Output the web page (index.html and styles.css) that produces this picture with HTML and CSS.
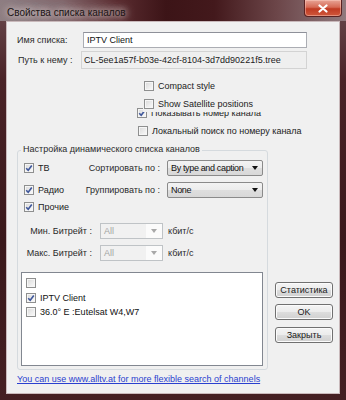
FILE: index.html
```html
<!DOCTYPE html>
<html>
<head>
<meta charset="utf-8">
<link rel="stylesheet" href="styles.css">
</head>
<body>
<div class="window">
  <div class="titlebar">
    <span class="title">Свойства списка каналов</span>
    <div class="close">
      <svg width="12" height="9" viewBox="0 0 12 9"><path d="M2.5 1.5 L9.5 7.5 M9.5 1.5 L2.5 7.5" stroke="#fff" stroke-width="2.2" stroke-linecap="round"/></svg>
    </div>
  </div>
  <div class="client">
    <div class="row name-row">
      <span class="lbl lbl-name">Имя списка:</span>
      <div class="input">IPTV Client</div>
    </div>
    <div class="row path-row">
      <span class="lbl lbl-path">Путь к нему :</span>
      <div class="readonly">CL-5ee1a57f-b03e-42cf-8104-3d7dd90221f5.tree</div>
    </div>
    <div class="chk compact"><span class="cb"></span><span class="chk-text">Compact style</span></div>
    <div class="chk satellite"><span class="cb"></span><span class="chk-text">Show Satellite positions</span></div>
    <div class="chk shownum"><span class="cb checked"><svg width="8" height="8" viewBox="0 0 8 8"><path d="M1.2 4.2 L3.2 6.3 L6.8 1.5" fill="none" stroke="#3f579b" stroke-width="1.6"/></svg></span><span class="chk-text">Показывать номер канала</span></div>
    <div class="chk localsearch"><span class="cb"></span><span class="chk-text">Локальный поиск по номеру канала</span></div>

    <div class="lower">
      <div class="group">
        <div class="legend">Настройка динамического списка каналов</div>
        <div class="grow grow1">
          <div class="gcb"><span class="cb checked"><svg width="8" height="8" viewBox="0 0 8 8"><path d="M1.2 4.2 L3.2 6.3 L6.8 1.5" fill="none" stroke="#3f579b" stroke-width="1.6"/></svg></span><span class="chk-text">ТВ</span></div>
          <div class="glbl"><span>Сортировать по :</span></div>
          <div class="combo"><span class="combo-text">By type and caption</span><span class="arrow"></span></div>
        </div>
        <div class="grow grow2">
          <div class="gcb"><span class="cb checked"><svg width="8" height="8" viewBox="0 0 8 8"><path d="M1.2 4.2 L3.2 6.3 L6.8 1.5" fill="none" stroke="#3f579b" stroke-width="1.6"/></svg></span><span class="chk-text">Радио</span></div>
          <div class="glbl"><span>Группировать по :</span></div>
          <div class="combo"><span class="combo-text">None</span><span class="arrow"></span></div>
        </div>
        <div class="grow grow3">
          <div class="gcb"><span class="cb checked"><svg width="8" height="8" viewBox="0 0 8 8"><path d="M1.2 4.2 L3.2 6.3 L6.8 1.5" fill="none" stroke="#3f579b" stroke-width="1.6"/></svg></span><span class="chk-text">Прочие</span></div>
        </div>
        <div class="brow brow1">
          <div class="blbl">Мин. Битрейт :</div>
          <div class="dcombo"><span class="dcombo-text">All</span><span class="darrow-box"><span class="arrow gray"></span></span></div>
          <div class="unit">кбит/с</div>
        </div>
        <div class="brow brow2">
          <div class="blbl">Макс. Битрейт :</div>
          <div class="dcombo"><span class="dcombo-text">All</span><span class="darrow-box"><span class="arrow gray"></span></span></div>
          <div class="unit">кбит/с</div>
        </div>
        <div class="list">
          <div class="item"><span class="cb"></span></div>
          <div class="item"><span class="cb checked"><svg width="8" height="8" viewBox="0 0 8 8"><path d="M1.2 4.2 L3.2 6.3 L6.8 1.5" fill="none" stroke="#3f579b" stroke-width="1.6"/></svg></span><span class="item-text">IPTV Client</span></div>
          <div class="item"><span class="cb"></span><span class="item-text">36.0° E :Eutelsat W4,W7</span></div>
        </div>
      </div>
      <div class="buttons">
        <div class="btn">Статистика</div>
        <div class="btn btn-ok">OK</div>
        <div class="btn btn-close">Закрыть</div>
      </div>
    </div>
    <a class="link" href="#">You can use www.alltv.at for more flexible search of channels</a>
  </div>
</div>
</body>
</html>
```

FILE: styles.css
```css
* { box-sizing: border-box; }
html, body { margin: 0; padding: 0; }
body {
  width: 346px;
  height: 400px;
  overflow: hidden;
  font-family: "Liberation Sans", Arial, sans-serif;
  font-size: 9px;
  color: #222;
}
.window {
  width: 346px;
  height: 400px;
  background: linear-gradient(180deg, #6a4a4e 0%, #4a2327 20%, #3a181b 60%, #441f22 100%);
  padding: 0 6px 6px 6px;
  display: flex;
  flex-direction: column;
}
.titlebar {
  height: 21px;
  margin: 0 -6px;
  padding: 0 6px 0 7px;
  display: flex;
  align-items: center;
  justify-content: space-between;
  background: linear-gradient(90deg, #8e7d82 0%, #82676c 18%, #5a2c30 34%, #3c1417 48%, #43191c 62%, #6c4649 80%, #907a7e 100%);
}
.title {
  font-size: 10px;
  color: #1a1414;
  margin-top: 3px;
  text-shadow: 0 0 6px rgba(235,225,225,0.95), 0 0 10px rgba(235,225,225,0.8), 0 0 14px rgba(235,225,225,0.6);
}
.close {
  align-self: flex-start;
  width: 38px;
  height: 17px;
  margin-right: -2px;
  border: 1px solid #5a2222;
  border-top: none;
  border-radius: 0 0 4px 4px;
  background: linear-gradient(180deg, #e8a496 0%, #d66a55 45%, #c03a22 55%, #d0583c 100%);
  display: flex;
  align-items: center;
  justify-content: center;
  box-shadow: inset 0 0 0 1px rgba(255,210,200,0.45);
}
.client {
  flex: 1;
  background: #f0f0f0;
  border: 1px solid #c9b9bb;
  display: flex;
  flex-direction: column;
  align-items: flex-start;
  position: relative;
}
.row { display: flex; align-items: center; }
.lbl { color: #2a2a2a; }
.name-row { margin-top: 10px; height: 16px; }
.lbl-name { margin-left: 10px; width: 66px; }
.input {
  width: 224px;
  height: 16px;
  background: #fff;
  border: 1px solid #abadb3;
  border-top-color: #8e9099;
  padding: 0 0 0 3px;
  line-height: 14px;
  color: #111;
}
.path-row { margin-top: 3px; height: 18px; }
.lbl-path { margin-left: 11px; width: 63px; }
.readonly {
  width: 226px;
  height: 18px;
  border: 1px solid #d3d3d3;
  background: #efefef;
  padding-left: 2px;
  line-height: 16px;
  color: #222;
}
.chk { display: flex; align-items: center; height: 14px; }
.cb {
  width: 10px;
  height: 10px;
  flex: none;
  border: 1px solid #8e8f8f;
  background: linear-gradient(135deg, #d8d8d8 0%, #eeeeee 60%, #fbfbfb 100%);
  box-shadow: inset 0 0 0 1px #f6f6f6;
  display: flex;
  align-items: center;
  justify-content: center;
}
.cb svg { display: block; }
.chk-text { margin-left: 4px; color: #222; white-space: nowrap; }
.compact { margin-top: 10px; margin-left: 137px; }
.satellite {
  margin-top: 2px;
  margin-left: 136px;
  height: 17px;
  padding-left: 1px;
  padding-right: 30px;
  background: #f0f0f0;
  position: relative;
  z-index: 1;
}
.shownum { margin-top: -6px; margin-left: 130px; }
.localsearch { margin-top: 4px; margin-left: 131px; }
.lower {
  display: flex;
  align-items: flex-start;
  margin-top: 12px;
  margin-left: 10px;
}
.group {
  width: 251px;
  height: 220px;
  border: 1px solid #d5dade;
  border-radius: 3px;
  display: flex;
  flex-direction: column;
  align-items: flex-start;
}
.legend {
  margin: -8px 0 0 3px;
  padding: 0 2px;
  height: 12px;
  line-height: 12px;
  background: #f0f0f0;
  color: #2a2a2a;
}
.grow { display: flex; align-items: center; margin-left: 6px; }
.grow1 { margin-top: 5px; height: 16px; }
.grow2 { margin-top: 6px; height: 16px; }
.grow3 { margin-top: 3px; height: 12px; }
.gcb { display: flex; align-items: center; width: 56px; }
.glbl {
  width: 80px;
  display: flex;
  justify-content: flex-end;
  white-space: nowrap;
  color: #2a2a2a;
}
.combo {
  margin-left: 7px;
  width: 96px;
  height: 16px;
  border: 1px solid #8a8a8a;
  border-radius: 2px;
  background: linear-gradient(180deg, #f3f3f3 0%, #ececec 50%, #dedede 51%, #d8d8d8 100%);
  display: flex;
  align-items: center;
  justify-content: space-between;
  padding: 0 4px 0 3px;
  color: #111;
}
.combo-text { letter-spacing: -0.35px; white-space: nowrap; }
.arrow {
  width: 0;
  height: 0;
  flex: none;
  border-left: 3px solid transparent;
  border-right: 3px solid transparent;
  border-top: 4px solid #111;
}
.arrow.gray { border-top-color: #a8a8a8; }
.brow { display: flex; align-items: center; height: 16px; }
.brow1 { margin-top: 10px; }
.brow2 { margin-top: 6px; }
.blbl { width: 74px; text-align: right; color: #2a2a2a; white-space: nowrap; }
.dcombo {
  margin-left: 8px;
  width: 63px;
  height: 16px;
  border: 1px solid #bfc3c6;
  background: #f1f1f1;
  display: flex;
  align-items: stretch;
}
.dcombo-text { flex: 1; padding-left: 3px; line-height: 14px; color: #a3a3a3; }
.darrow-box {
  width: 16px;
  background: #fbfbfb;
  display: flex;
  align-items: center;
  justify-content: center;
}
.unit { margin-left: 5px; color: #2a2a2a; }
.list {
  margin-top: 11px;
  margin-left: 3px;
  width: 242px;
  height: 94px;
  background: #fff;
  border: 1px solid #828790;
  padding: 3px 0 0 4px;
  display: flex;
  flex-direction: column;
}
.item { display: flex; align-items: center; height: 14.5px; }
.item-text { margin-left: 4px; color: #111; }
.buttons {
  margin-left: 7px;
  margin-top: 132px;
  display: flex;
  flex-direction: column;
}
.btn {
  width: 58px;
  height: 16px;
  border: 1px solid #707070;
  border-radius: 3px;
  background: linear-gradient(180deg, #f4f4f4 0%, #ececec 48%, #dddddd 52%, #d0d0d0 100%);
  box-shadow: inset 0 0 0 1px #fbfbfb;
  display: flex;
  align-items: center;
  justify-content: center;
  color: #1a1a1a;
}
.btn-ok { margin-top: 6px; }
.btn-close { margin-top: 7px; }
.link {
  margin-top: 3px;
  margin-left: 10px;
  line-height: 12px;
  color: #2a3fcf;
  text-decoration: underline;
}
```
